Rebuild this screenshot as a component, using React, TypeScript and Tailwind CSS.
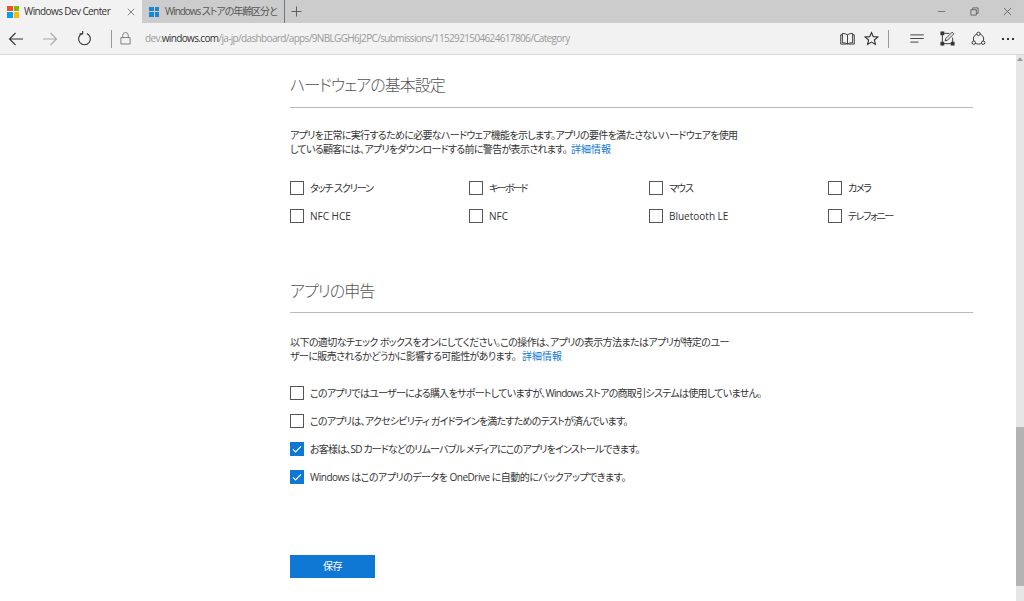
const jp = "font-['Open_Sans','Noto_Sans_CJK_JP',sans-serif] [font-feature-settings:'palt'] tracking-[-0.6px]";

function Check({ label, checked, track }: { label: string; checked?: boolean; track: string }) {
  return (
    <label className="flex items-center gap-[6px] text-[10px] text-[#333] leading-[14px] whitespace-nowrap">
      {checked ? (
        <span className="w-[14px] h-[14px] bg-[#0f78d4] flex items-center justify-center">
          <svg viewBox="0 0 14 14" className="w-[14px] h-[14px]" fill="none" stroke="#fff" strokeWidth="1.1">
            <path d="M3 7.4 L5.6 10 L11 4.3" />
          </svg>
        </span>
      ) : (
        <span className="w-[14px] h-[14px] border-[1.5px] border-[#555]" />
      )}
      <span className={track}>{label}</span>
    </label>
  );
}

function Chrome() {
  return (
    <div className="shrink-0">
      {/* tab strip */}
      <div className="h-[23px] bg-[#cccccc] flex items-stretch">
        <div className="w-[142px] bg-[#f2f2f2] flex items-center pl-[7px] pr-[7px]">
          <div className="grid grid-cols-2 gap-[1px] w-[12px] h-[12px] shrink-0">
            <div className="bg-[#f25022]" />
            <div className="bg-[#7fba00]" />
            <div className="bg-[#00a4ef]" />
            <div className="bg-[#ffb900]" />
          </div>
          <span className="ml-[5px] text-[10px] text-[#333]">Windows Dev Center</span>
          <svg viewBox="0 0 10 10" className="ml-auto w-[8px] h-[8px]" stroke="#555" strokeWidth="0.9">
            <path d="M1 1 L9 9 M9 1 L1 9" />
          </svg>
        </div>
        <div className="w-[143px] flex items-center pl-[7px] border-r border-[#777]">
          <div className="grid grid-cols-2 gap-[1px] w-[10px] h-[10px] shrink-0">
            <div className="bg-[#1a86d8]" />
            <div className="bg-[#1a86d8]" />
            <div className="bg-[#1a86d8]" />
            <div className="bg-[#1a86d8]" />
          </div>
          <span className="ml-[6px] text-[10px] text-[#555] whitespace-nowrap tracking-[-1.05px]">Windows ストアの年齢区分と</span>
        </div>
        <svg viewBox="0 0 12 12" className="ml-[6px] mt-[6px] w-[11px] h-[11px]" stroke="#555" strokeWidth="1">
          <path d="M6 0.5 V11.5 M0.5 6 H11.5" />
        </svg>
        <div className="ml-auto flex items-center gap-[24px] pr-[12px]">
          <svg viewBox="0 0 10 10" className="w-[9px] h-[9px]" stroke="#666" strokeWidth="0.9"><path d="M1 5 H9" /></svg>
          <svg viewBox="0 0 10 10" className="w-[9px] h-[9px]" fill="none" stroke="#555" strokeWidth="0.9"><path d="M1 3 H7 V9 H1 Z M3 3 V1 H9 V7 H7" /></svg>
          <svg viewBox="0 0 10 10" className="w-[9px] h-[9px]" stroke="#555" strokeWidth="0.9"><path d="M1 1 L9 9 M9 1 L1 9" /></svg>
        </div>
      </div>
      {/* address bar */}
      <div className="h-[32px] bg-[#f2f2f2] border-b border-[#d6d6d6] flex items-center relative">
        <svg viewBox="0 0 16 16" className="ml-[8px] w-[16px] h-[16px]" fill="none" stroke="#333" strokeWidth="1.1">
          <path d="M1.5 8 H15 M7.5 2 L1.5 8 L7.5 14" />
        </svg>
        <svg viewBox="0 0 16 16" className="ml-[18px] w-[16px] h-[16px]" fill="none" stroke="#aaa" strokeWidth="1.1">
          <path d="M1 8 H14.5 M8.5 2 L14.5 8 L8.5 14" />
        </svg>
        <svg viewBox="0 0 16 16" className="ml-[19px] w-[15px] h-[15px]" fill="none" stroke="#333" strokeWidth="1.2">
          <path d="M5.5 2.6 A6.3 6.3 0 1 0 10.5 2.6 M6 0 V3 H2.8" />
        </svg>
        <div className="ml-[19px] w-px h-[18px] bg-[#999]" />
        <svg viewBox="0 0 12 14" className="ml-[8px] w-[11px] h-[13px]" fill="none" stroke="#777" strokeWidth="1">
          <path d="M1 6 H11 V13 H1 Z M3 6 V3.5 A3 3 0 0 1 9 3.5 V6" />
        </svg>
        <span className="ml-[14px] text-[10px] text-[#999] whitespace-nowrap tracking-[-0.65px]">
          dev.<span className="text-[#333]">windows.com</span>/ja-jp/dashboard/apps/9NBLGGH6J2PC/submissions/1152921504624617806/Category
        </span>
        <div className="ml-auto flex items-center pr-[10px]">
          <svg viewBox="0 0 16 14" className="w-[15px] h-[13px]" fill="none" stroke="#333" strokeWidth="1">
            <path d="M8 3 Q6 1.5 2.5 1.5 V11.5 Q6 11.5 8 13 Q10 11.5 13.5 11.5 V1.5 Q10 1.5 8 3 V13" />
            <path d="M2.5 3 H0.7 V13 H7 M13.5 3 H15.3 V13 H9" />
          </svg>
          <svg viewBox="0 0 24 24" className="ml-[9px] w-[15px] h-[15px]" fill="none" stroke="#333" strokeWidth="1.8">
            <path d="M12 2.5 L14.9 9 L22 9.7 L16.6 14.4 L18.2 21.4 L12 17.7 L5.8 21.4 L7.4 14.4 L2 9.7 L9.1 9 Z" />
          </svg>
          <div className="ml-[9px] w-px h-[18px] bg-[#999]" />
          <svg viewBox="0 0 16 10" className="ml-[21px] w-[15px] h-[9px]" stroke="#333" strokeWidth="1">
            <path d="M0 1 H15 M0 5 H15 M0 9 H9" />
          </svg>
          <svg viewBox="0 0 16 16" className="ml-[15px] w-[15px] h-[15px]" fill="none" stroke="#333" strokeWidth="1">
            <path d="M2.5 2.5 H10 M2.5 2.5 V13.5 H13.5 V7" />
            <rect x="1" y="1" width="3" height="3" fill="#333" />
            <rect x="1" y="12" width="3" height="3" fill="#333" />
            <rect x="12" y="12" width="3" height="3" fill="#333" />
            <path d="M5.5 10.5 L6.2 8 L13 1.2 L14.8 3 L8 9.8 Z" fill="#f2f2f2" />
          </svg>
          <svg viewBox="0 0 16 16" className="ml-[16px] w-[15px] h-[15px]" fill="none" stroke="#333" strokeWidth="1">
            <circle cx="8" cy="8.5" r="5.5" />
            <circle cx="8" cy="3" r="1.8" fill="#f2f2f2" />
            <circle cx="3" cy="12.5" r="1.8" fill="#f2f2f2" />
            <circle cx="13" cy="12.5" r="1.8" fill="#f2f2f2" />
          </svg>
          <span className="ml-[16px] flex gap-[3px]">
            <i className="w-[2px] h-[2px] bg-[#333]" />
            <i className="w-[2px] h-[2px] bg-[#333]" />
            <i className="w-[2px] h-[2px] bg-[#333]" />
          </span>
        </div>
      </div>
    </div>
  );
}

const hardware = [
  { label: "タッチ スクリーン", track: "tracking-[-1.1px]" },
  { label: "キーボード", track: "tracking-[-1.8px]" },
  { label: "マウス", track: "tracking-[-1px]" },
  { label: "カメラ", track: "tracking-[-1.4px]" },
  { label: "NFC HCE", track: "tracking-[0px]" },
  { label: "NFC", track: "tracking-[0px]" },
  { label: "Bluetooth LE", track: "tracking-[0px]" },
  { label: "テレフォニー", track: "tracking-[-1.4px]" },
];

export default function App() {
  return (
    <div className={`w-[1024px] h-[601px] overflow-hidden bg-white flex flex-col ${jp}`}>
      <Chrome />
      <div className="flex-1 relative">
        {/* scrollbar */}
        <div className="absolute right-0 top-0 bottom-0 w-[8px] bg-[#e6e6e6]">
          <svg viewBox="0 0 8 5" className="absolute left-[1px] top-[2px] w-[6px] h-[4px]" fill="#999">
            <path d="M4 0 L8 5 H0 Z" />
          </svg>
          <div className="absolute left-0 right-0 top-[372px] h-[159px] bg-[#b3b3b3]" />
        </div>
        <div className="ml-[290px] w-[683px]">
          <h2 className="mt-[18px] text-[16px] leading-[24px] font-light text-[#555] tracking-[-1px]">ハードウェアの基本設定</h2>
          <div className="mt-[10px] h-px bg-[#bbb]" />
          <p className="mt-[20px] text-[10px] leading-[14px] text-[#333] whitespace-nowrap tracking-[-0.68px]">
            アプリを正常に実行するために必要なハードウェア機能を示します。アプリの要件を満たさないハードウェアを使用
            <br />
            している顧客には、アプリをダウンロードする前に警告が表示されます。
            <span className="text-[#0f78d4] ml-[4px] tracking-normal">詳細情報</span>
          </p>
          <div className="mt-[25px] grid grid-cols-[179px_180px_179px_145px] gap-y-[14px]">
            {hardware.map((h) => (
              <Check key={h.label} label={h.label} track={h.track} />
            ))}
          </div>
          <h2 className="mt-[56px] text-[16px] leading-[24px] font-light text-[#555] tracking-[-1px]">アプリの申告</h2>
          <div className="mt-[9px] h-px bg-[#bbb]" />
          <p className="mt-[22px] text-[10px] leading-[14px] text-[#333] whitespace-nowrap">
            以下の適切なチェック ボックスをオンにしてください。この操作は、アプリの表示方法またはアプリが特定のユー
            <br />
            ザーに販売されるかどうかに影響する可能性があります。
            <span className="text-[#0f78d4] ml-[6px] tracking-normal">詳細情報</span>
          </p>
          <div className="mt-[23px] flex flex-col gap-[14px]">
            <Check track="tracking-[-0.72px]" label="このアプリではユーザーによる購入をサポートしていますが、Windows ストアの商取引システムは使用していません。" />
            <Check track="tracking-[-0.75px]" label="このアプリは、アクセシビリティ ガイドラインを満たすためのテストが済んでいます。" />
            <Check track="tracking-[-0.82px]" checked label="お客様は、SD カードなどのリムーバブル メディアにこのアプリをインストールできます。" />
            <Check track="tracking-[-0.5px]" checked label="Windows はこのアプリのデータを OneDrive に自動的にバックアップできます。" />
          </div>
          <button className="mt-[71px] w-[85px] h-[23px] bg-[#0f78d4] text-white text-[10px] block">保存</button>
        </div>
      </div>
    </div>
  );
}
